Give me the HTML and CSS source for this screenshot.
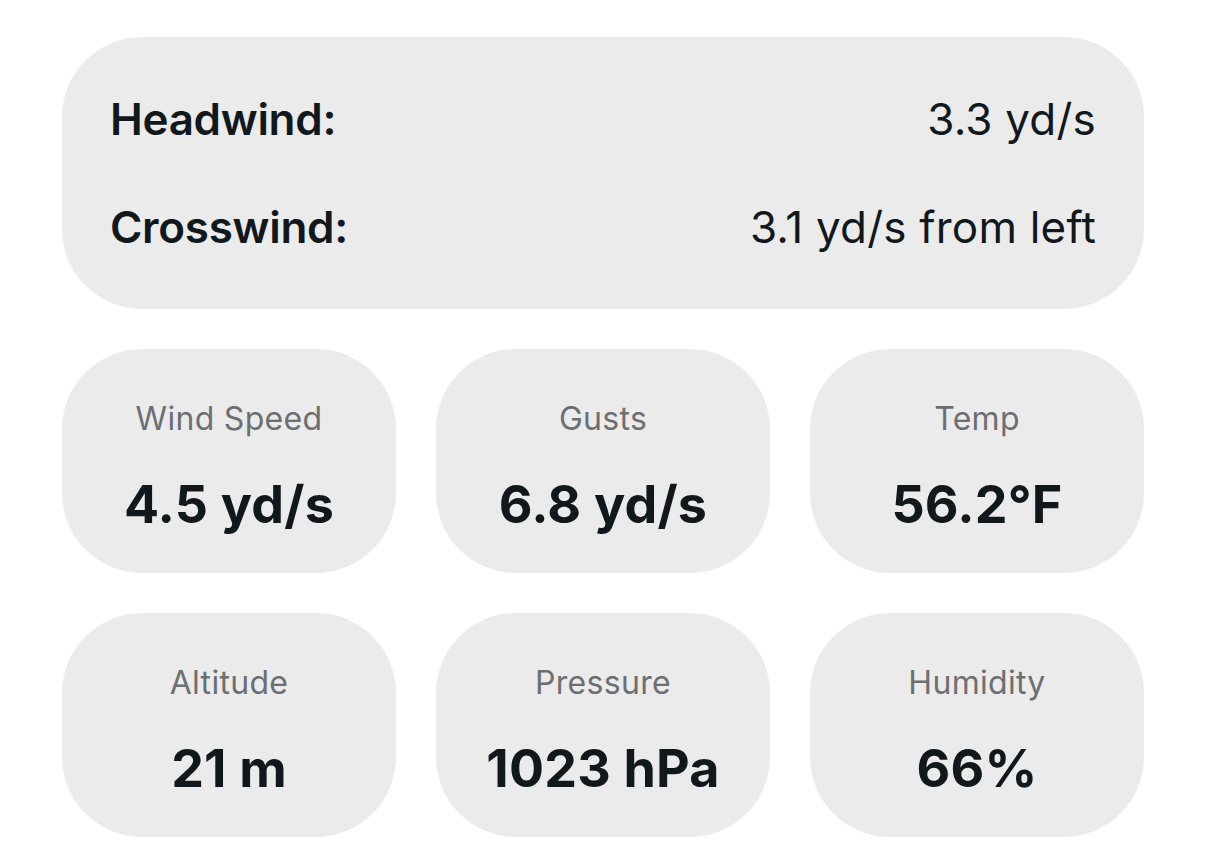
FILE: index.html
```html
<!DOCTYPE html>
<html>
<head>
<meta charset="utf-8">
<link rel="stylesheet" href="styles.css">
</head>
<body>
<div class="page">
  <div class="wind-card">
    <div class="wind-row"><span class="wind-label">Headwind:</span><span class="wind-value">3.3 yd/s</span></div>
    <div class="wind-row"><span class="wind-label">Crosswind:</span><span class="wind-value">3.1 yd/s from left</span></div>
  </div>
  <div class="grid">
    <div class="stat"><div class="stat-label">Wind Speed</div><div class="stat-value">4.5 yd/s</div></div>
    <div class="stat"><div class="stat-label">Gusts</div><div class="stat-value">6.8 yd/s</div></div>
    <div class="stat"><div class="stat-label">Temp</div><div class="stat-value">56.2°F</div></div>
    <div class="stat"><div class="stat-label">Altitude</div><div class="stat-value">21 m</div></div>
    <div class="stat"><div class="stat-label">Pressure</div><div class="stat-value">1023 hPa</div></div>
    <div class="stat"><div class="stat-label">Humidity</div><div class="stat-value">66%</div></div>
  </div>
</div>
</body>
</html>
```
FILE: styles.css
```css
* { box-sizing: border-box; }
html, body { margin: 0; padding: 0; background: #ffffff; }
body {
  font-family: Inter, "Noto Sans", sans-serif;
  color: #11181c;
}
.page {
  padding: 37px 62px;
  display: flex;
  flex-direction: column;
  gap: 40px;
}
.wind-card {
  background: #ebebeb;
  border-radius: 80px;
  height: 272px;
  padding: 54px 48px;
  display: flex;
  flex-direction: column;
  gap: 52px;
}
.wind-row {
  display: flex;
  justify-content: space-between;
  align-items: center;
  height: 56px;
  line-height: 56px;
  font-size: 44px;
}
.wind-label { font-weight: 600; letter-spacing: -0.3px; }
.wind-value { font-weight: 400; letter-spacing: 0.2px; }
.grid {
  display: grid;
  grid-template-columns: repeat(3, 1fr);
  gap: 40px;
}
.stat {
  background: #ebebeb;
  border-radius: 80px;
  height: 224px;
  padding-top: 50px;
  display: flex;
  flex-direction: column;
  align-items: center;
  gap: 36px;
}
.stat-label {
  font-size: 32px;
  line-height: 40px;
  color: #6c6f72;
  letter-spacing: 0.3px;
}
.stat-value {
  font-size: 52px;
  line-height: 60px;
  font-weight: 700;
  letter-spacing: 0.2px;
}
```
